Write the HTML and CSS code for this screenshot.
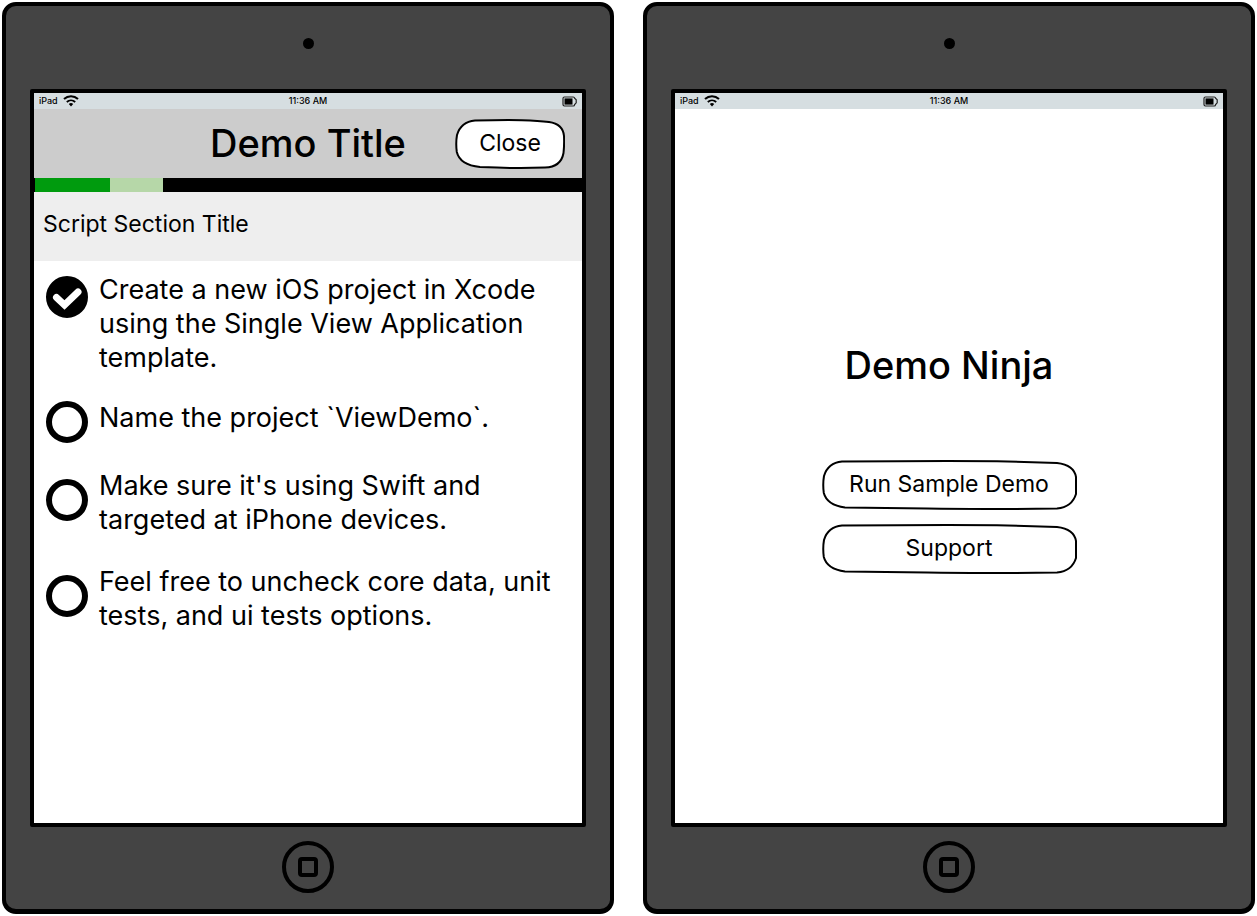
FILE: index.html
```html
<!DOCTYPE html>
<html lang="en">
<head>
<meta charset="utf-8">
<meta name="viewport" content="width=device-width, initial-scale=1">
<title>Demo Ninja</title>
<link rel="stylesheet" href="styles.css">
</head>
<body>
<svg class="symbols" aria-hidden="true">
  <symbol id="wifi" viewBox="0 0 16 12">
    <g fill="none" stroke="#000" stroke-width="2">
      <path d="M1 4C5 0.2 11 0.2 15 4"/>
      <path d="M3.8 7C6.2 4.7 9.8 4.7 12.2 7" stroke-width="1.8"/>
    </g>
    <path d="M5.8 8.9Q8 7.2 10.2 8.9L8 11.4Z"/>
  </symbol>
  <symbol id="battery" viewBox="0 0 15 11">
    <path d="M2.400 1H11.200Q12.500 1 12.600 2.200L14.200 3.800V6.800L12.600 8.600Q12.500 10 11.200 10H2.400Q1 10 1 8.600V2.400Q1 1 2.400 1Z" fill="none" stroke="#222" stroke-width="1.200"/>
    <rect x="2.500" y="2.400" width="8" height="6.200"/>
  </symbol>
</svg>
<main class="board">
  <section class="device">
    <div class="bezel-top"><span class="camera"></span></div>
    <div class="screen">
      <div class="status">
        <span class="carrier">iPad <svg class="wifi"><use href="#wifi"/></svg></span>
        <time>11:36 AM</time>
        <svg class="battery"><use href="#battery"/></svg>
      </div>
      <header class="titlebar">
        <h1 class="title">Demo Title</h1>
        <button class="sketch-button close" type="button">
          <svg class="outline" viewBox="0 0 110 50" preserveAspectRatio="none" aria-hidden="true"><path d="M20 1.600Q48 .8 67 1.200Q84 1.600 94 3Q108 5 109 17Q109.400 26 108.500 34Q106 48 90 48.600Q65 49.400 42 48.600L25 48Q5 46 1.800 33Q.6 24 2 16Q6 3 20 1.600Z"/></svg>
          <span class="caption">Close</span>
        </button>
      </header>
      <div class="progress" role="img" aria-label="Progress"><span class="done"></span><span class="current"></span></div>
      <h2 class="section-title">Script Section Title</h2>
      <ul class="steps">
        <li class="step first">
          <span class="tick"><input type="checkbox" id="s1" checked><svg viewBox="0 0 42 42" aria-hidden="true"><path d="M10.500 21.500L18.500 29L32 16" /></svg></span>
          <label for="s1">Create a new iOS project in Xcode using the Single View Application template.</label>
        </li>
        <li class="step">
          <span class="tick"><input type="checkbox" id="s2"></span>
          <label for="s2">Name the project `ViewDemo`.</label>
        </li>
        <li class="step double">
          <span class="tick"><input type="checkbox" id="s3"></span>
          <label for="s3">Make sure it's using Swift and targeted at iPhone devices.</label>
        </li>
        <li class="step double">
          <span class="tick"><input type="checkbox" id="s4"></span>
          <label for="s4">Feel free to uncheck core data, unit tests, and ui tests options.</label>
        </li>
      </ul>
    </div>
    <div class="bezel-bottom"><button class="home" type="button" aria-label="Home"><span class="glyph"></span></button></div>
  </section>

  <section class="device">
    <div class="bezel-top"><span class="camera"></span></div>
    <div class="screen">
      <div class="status">
        <span class="carrier">iPad <svg class="wifi"><use href="#wifi"/></svg></span>
        <time>11:36 AM</time>
        <svg class="battery"><use href="#battery"/></svg>
      </div>
      <div class="welcome">
        <h1 class="title">Demo Ninja</h1>
        <div class="menu">
          <button class="sketch-button" type="button">
            <svg class="outline" viewBox="0 0 255 50" preserveAspectRatio="none" aria-hidden="true"><path d="M20 1.600Q110 .7 175 1.200L235 3Q252 5 254 17V34Q250 47 235 48.600Q160 49.400 105 48.600L23 47.600Q5 45 1.800 33Q.6 24 2 16Q6 3 20 1.600Z"/></svg>
            <span class="caption">Run Sample Demo</span>
          </button>
          <button class="sketch-button" type="button">
            <svg class="outline" viewBox="0 0 255 50" preserveAspectRatio="none" aria-hidden="true"><path d="M20 1.600Q110 .7 175 1.200L235 3Q252 5 254 17V34Q250 47 235 48.600Q160 49.400 105 48.600L23 47.600Q5 45 1.800 33Q.6 24 2 16Q6 3 20 1.600Z"/></svg>
            <span class="caption">Support</span>
          </button>
        </div>
      </div>
    </div>
    <div class="bezel-bottom"><button class="home" type="button" aria-label="Home"><span class="glyph"></span></button></div>
  </section>
</main>
</body>
</html>
```
FILE: styles.css
```css
* { box-sizing: border-box; }
body { margin: 0; background: #fff; color: #000; font-family: Inter, "Open Sans", sans-serif; }
h1, h2, ul { margin: 0; padding: 0; font-weight: 400; }
button { font: inherit; color: inherit; background: none; border: 0; padding: 0; cursor: pointer; }
.symbols { position: absolute; width: 0; height: 0; }

.board { display: grid; grid-template-columns: 1fr 1fr; gap: 29px; padding: 2px; min-height: 100vh; }
.device { display: flex; flex-direction: column; padding: 0 24px; background: #444; border: 4px solid #000; border-bottom-width: 5px; border-radius: 14px; }
.bezel-top { display: flex; justify-content: center; height: 83px; padding-top: 32px; }
.camera { width: 11px; height: 11px; border-radius: 50%; background: #000; }
.bezel-bottom { display: flex; align-items: center; justify-content: center; height: 82px; padding-bottom: 2px; }
.home { display: grid; place-items: center; width: 52px; height: 52px; border: 4px solid #000; border-radius: 50%; }
.glyph { width: 20px; height: 20px; border: 4px solid #000; border-radius: 4px; }

.screen { display: flex; flex-direction: column; flex: 1; background: #fff; border: 4px solid #000; border-radius: 2px; }
.status { display: grid; grid-template-columns: 1fr auto 1fr; align-items: center; height: 16px; padding: 0 5px; background: #d6dee1; font-size: 9px; line-height: 16px; font-weight: 500; }
.carrier { display: flex; align-items: center; gap: 5px; }
.wifi { width: 16px; height: 12px; }
.battery { width: 15px; height: 11px; justify-self: end; }

.titlebar { display: grid; grid-template-columns: 1fr auto 1fr; align-items: center; min-height: 69px; padding: 0 17px; background: #ccc; }
.title { grid-column: 2; font-size: 38px; line-height: 48px; font-weight: 500; }
.titlebar .title { padding-bottom: 2px; }
.close { width: 110px; justify-self: end; }
.sketch-button { position: relative; display: grid; place-items: center; height: 50px; font-size: 23px; line-height: 28px; }
.outline { position: absolute; inset: 0; width: 100%; height: 100%; fill: #fff; stroke: #000; stroke-width: 2; }
.caption { position: relative; padding-bottom: 2px; }

.progress { display: grid; grid-template-columns: 75fr 53fr 419fr; height: 14px; padding-left: 1px; background: #000; }
.done { background: #009b0e; }
.current { background: #b6d7a8; }
.section-title { min-height: 69px; padding: 18px 9px; background: #eee; font-size: 23px; line-height: 28px; }

.steps { display: flex; flex-direction: column; gap: 26px; padding: 12px; list-style: none; font-size: 27px; line-height: 34px; }
.step { display: flex; gap: 11px; min-height: 42px; }
.double { min-height: 70px; }
.tick { position: relative; flex: none; width: 42px; height: 42px; }
.first .tick { margin-top: 3px; }
.double .tick { margin-top: 10px; }
.tick input { appearance: none; display: block; width: 42px; height: 42px; margin: 0; border: 6px solid #000; border-radius: 50%; background: #fff; }
.tick input:checked { background: #000; }
.tick svg { position: absolute; inset: 0; pointer-events: none; fill: none; stroke: #fff; stroke-width: 7; stroke-linecap: round; }

.welcome { display: flex; flex: 1; flex-direction: column; align-items: center; justify-content: center; gap: 71px; padding: 0 16px 17px; }
.menu { display: grid; gap: 14px; width: 100%; max-width: 255px; }

@media (max-width: 900px) { .board { grid-template-columns: 1fr; } }
```
